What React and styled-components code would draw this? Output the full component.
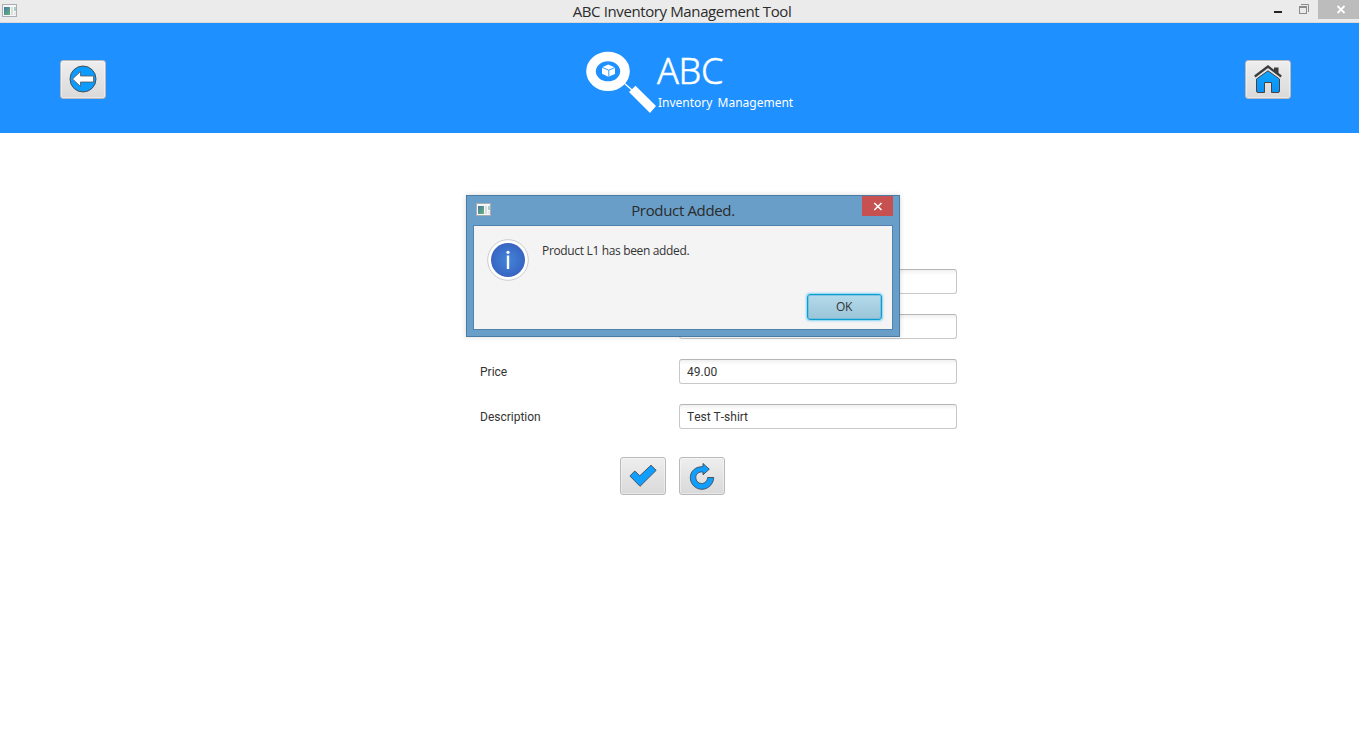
import React from "react";
import styled, { createGlobalStyle } from "styled-components";

const GlobalStyle = createGlobalStyle`
  * { box-sizing: border-box; }
  body { margin: 0; background: #fff; overflow: hidden; }
  button { font: inherit; padding: 0; margin: 0; }
  svg { display: block; flex: none; }
`;

const Window = styled.div`
  position: relative;
  width: 1359px;
  height: 756px;
  background: #fff;
  font-family: Roboto, "Liberation Sans", sans-serif;
  font-size: 12px;
  color: #333;
`;

const TitleBar = styled.header`
  display: grid;
  grid-template-columns: 1fr auto 1fr;
  height: 23px;
  background: #ebebeb;
  border-bottom: 1px solid #dcd8d4;
`;

const TitleIcon = styled.div`
  padding: 4px 0 0 2px;
`;

const TitleText = styled.div`
  padding-left: 5px;
  font: 15px/23px "Open Sans", "Noto Sans", sans-serif;
  letter-spacing: -0.38px;
  color: #2b2b2b;
  white-space: nowrap;
`;

const WindowControls = styled.div`
  display: flex;
  justify-content: flex-end;
`;

const Control = styled.div`
  width: ${(p) => p.$width}px;
  height: 19px;
  background: ${(p) => p.$bg || "transparent"};
`;

const Banner = styled.div`
  display: flex;
  align-items: flex-start;
  justify-content: space-between;
  height: 110px;
  padding: 28px 68px 0 60px;
  background: #1e90ff;
`;

const IconButton = styled.button`
  display: flex;
  align-items: center;
  justify-content: center;
  width: 46px;
  height: ${(p) => p.$height || 38}px;
  margin-top: ${(p) => p.$top || 0}px;
  padding-bottom: ${(p) => p.$lift || 0}px;
  border: 1px solid #b9b9b9;
  border-radius: 3px;
  background: linear-gradient(#eee, #d9d9d9);
  box-shadow: inset 0 0 0 1px rgba(255, 255, 255, 0.4);
`;

const Brand = styled.div`
  display: flex;
  width: 214px;
  margin-left: 35px;
`;

const BrandText = styled.div`
  display: flex;
  flex-direction: column;
  color: #fff;
  white-space: nowrap;
`;

const BrandName = styled.div`
  margin-left: 1px;
  font: 300 36px/39px "Noto Sans", "Open Sans", sans-serif;
  letter-spacing: -0.3px;
  -webkit-text-stroke: 0.5px #fff;
`;

const BrandSub = styled.div`
  margin: 6px 0 0 2px;
  font: 12px/14px "Noto Sans", "Open Sans", sans-serif;
  word-spacing: 2px;
`;

const Form = styled.form`
  display: flex;
  flex-direction: column;
  gap: 20px;
  padding: 136px 0 0 480px;
`;

const Field = styled.label`
  display: grid;
  grid-template-columns: 199px 278px;
  align-items: center;
  height: 25px;
`;

const Input = styled.input`
  grid-column: 2;
  width: 278px;
  height: 25px;
  padding: 0 7px;
  font: inherit;
  font-kerning: none;
  color: #333;
  border: 1px solid #c8c8c8;
  border-top-color: #b5b5b5;
  border-radius: 3px;
  outline: none;
  background: linear-gradient(#f0f0f0, #fff 5px);
`;

const Actions = styled.div`
  display: flex;
  gap: 13px;
  padding: 8px 0 0 140px;
`;

const Dialog = styled.section`
  position: absolute;
  left: 466px;
  top: 195px;
  width: 434px;
  height: 142px;
  padding: 0 6px 6px;
  border: 1px solid #4a7ba3;
  background: #689ec8;
  box-shadow: 0 0 5px rgba(0, 0, 0, 0.16);
`;

const DialogBar = styled.div`
  display: grid;
  grid-template-columns: 1fr auto 1fr;
  height: 29px;
`;

const DialogIcon = styled.div`
  padding: 7px 0 0 3px;
`;

const DialogTitle = styled.div`
  font: 15px/29px "Open Sans", "Noto Sans", sans-serif;
  letter-spacing: -0.34px;
  color: #2b2b2b;
`;

const DialogClose = styled.div`
  justify-self: end;
  width: 31px;
  height: 20px;
  background: #c75050;
`;

const DialogBody = styled.div`
  display: flex;
  height: 105px;
  padding: 13px 10px 9px 13px;
  border: 1px solid #4f82ac;
  background: #f4f4f4;
  font-family: "Open Sans", "Noto Sans", sans-serif;
`;

const Message = styled.p`
  flex: 1;
  margin: 4px 0 0 13px;
  line-height: 16px;
  letter-spacing: -0.34px;
`;

const OkButton = styled.button`
  align-self: flex-end;
  width: 75px;
  height: 26px;
  padding: 0 1px 2px 0;
  border: 1px solid #0b9dd2;
  border-radius: 3px;
  color: #333;
  letter-spacing: -0.3px;
  background: linear-gradient(#b4dbeb, #9bc4d8);
  box-shadow: inset 0 0 0 1px rgba(90, 180, 215, 0.55), 0 0 2px 1px rgba(70, 195, 238, 0.65);
`;

const AppIcon = () => (
  <svg width="16" height="14" viewBox="0 0 16 14">
    <defs>
      <linearGradient id="app" x1="0" y1="0" x2="1" y2="1">
        <stop offset="0" stopColor="#4676a8" />
        <stop offset="1" stopColor="#63b877" />
      </linearGradient>
    </defs>
    <rect x=".5" y=".5" width="14" height="12" fill="#f7f7f7" stroke="#a9adb5" />
    <rect x="2" y="3" width="6" height="8" fill="url(#app)" />
    <rect x="9" y="3" width="2" height="8" fill="#ddd" />
    <rect x="12" y="3" width="2" height="4" fill="#a8cfc9" />
    <rect x="12" y="8" width="2" height="3" fill="#e8e8e8" />
  </svg>
);

const BackIcon = () => (
  <svg width="28" height="28" viewBox="0 0 28 28">
    <circle cx="14" cy="14" r="13" fill="#0c9cff" stroke="#454545" strokeWidth=".9" />
    <path d="M3.5 14 L11.5 6.5 V11 H24.5 V17 H11.5 V21.5 Z" fill="#fff" stroke="#555" strokeWidth=".8" />
  </svg>
);

const HomeIcon = () => (
  <svg width="28" height="28" viewBox="0 0 28 28">
    <defs>
      <linearGradient id="home" x1="0" y1="0" x2="0" y2="1">
        <stop offset="0" stopColor="#0fa4ff" />
        <stop offset="1" stopColor="#0b91f5" />
      </linearGradient>
    </defs>
    <path d="M20 2.5 H24.5 V9 L20 6 Z" fill="#3c3c3c" />
    <path d="M.8 11.5 L14 1.5 L27.2 11.5" fill="none" stroke="#3c3c3c" strokeWidth="2.2" />
    <path d="M14 5.8 L2.5 14 V26 Q2.5 27.5 4 27.5 H10.5 V17.5 H17.5 V27.5 H24 Q25.5 27.5 25.5 26 V14 Z" fill="url(#home)" stroke="#444" />
  </svg>
);

const CheckIcon = () => (
  <svg width="28" height="24" viewBox="0 0 28 24">
    <path d="M.9 12 L5.8 7 L10.8 11.8 L22 1.2 L27.2 6.3 L11 22.3 Z" fill="#109fff" stroke="#3f4a55" strokeLinejoin="round" strokeWidth=".9" />
  </svg>
);

const ResetIcon = () => (
  <svg width="26" height="28" viewBox="0 0 26 28">
    <path d="M14 1.5 L20.3 7.2 L14 12.8 V10 C9.3 9.5 6.8 12.2 6.8 15.6 C6.8 19.2 9.3 21.5 12.6 21.5 C16 21.5 18.4 19 18.6 15.5 H24.7 C24.5 22 19.2 27.3 12.9 27.3 C6.5 27.3 1.3 22 1.3 15.6 C1.3 9.3 6.5 4.3 14 4.7 Z" fill="#109fff" stroke="#3f4a55" strokeLinejoin="round" strokeWidth=".9" />
  </svg>
);

const LogoMark = () => (
  <svg width="70" height="64" viewBox="0 0 70 64">
    <ellipse cx="22" cy="20.3" rx="17" ry="14.8" fill="none" stroke="#fff" strokeWidth="9.6" />
    <path d="M38 32 L46 39" stroke="#fff" strokeWidth="1.4" />
    <path d="M49.5 34.8 L70 55 L64 62 L43 41 Z" fill="#fff" />
    <path d="M22.3 13.5 L29 16.5 V23 L22.3 25.8 L16 22.7 V16.3 Z" fill="#fff" />
    <path d="M16 16.3 L22.8 19.2 L29 16.5 M22.8 19.2 V25.5" fill="none" stroke="#1e90ff" strokeWidth=".9" />
  </svg>
);

const InfoIcon = () => (
  <svg width="42" height="42" viewBox="0 0 42 42">
    <defs>
      <radialGradient id="info">
        <stop offset="0" stopColor="#4285dc" />
        <stop offset="1" stopColor="#3865c0" />
      </radialGradient>
    </defs>
    <circle cx="21" cy="21" r="20.3" fill="#fff" stroke="#cbcbd0" />
    <circle cx="21" cy="21" r="17" fill="url(#info)" />
    <circle cx="21" cy="13.3" r="1.6" fill="#fff" />
    <rect x="19.8" y="16.5" width="2.4" height="13.5" fill="#fff" />
  </svg>
);

const fields = [
  { name: "first", value: "" },
  { name: "second", value: "" },
  { name: "price", label: "Price", value: "49.00" },
  { name: "description", label: "Description", value: "Test T-shirt" },
];

export default function App() {
  return (
    <Window>
      <GlobalStyle />
      <TitleBar>
        <TitleIcon><AppIcon /></TitleIcon>
        <TitleText>ABC Inventory Management Tool</TitleText>
        <WindowControls>
          <Control $width={26}>
            <svg width="26" height="19"><rect x="10" y="11" width="8" height="2" fill="#222" /></svg>
          </Control>
          <Control $width={28}>
            <svg width="28" height="19">
              <path d="M11 4.5 H18.5 V12" fill="none" stroke="#8b8b8b" />
              <rect x="9.5" y="6.5" width="7" height="7" fill="none" stroke="#8b8b8b" />
              <path d="M9 7.5 H17" stroke="#8b8b8b" />
            </svg>
          </Control>
          <Control $width={41} $bg="#bcbcbc">
            <svg width="41" height="19"><path d="M19.5 6 L26.5 13 M26.5 6 L19.5 13" stroke="#fff" strokeWidth="1.8" /></svg>
          </Control>
        </WindowControls>
      </TitleBar>
      <Banner>
        <IconButton $height={39} $top={9} $lift={1}><BackIcon /></IconButton>
        <Brand>
          <LogoMark />
          <BrandText>
            <BrandName>ABC</BrandName>
            <BrandSub>Inventory Management</BrandSub>
          </BrandText>
        </Brand>
        <IconButton $height={39} $top={9} $lift={1}><HomeIcon /></IconButton>
      </Banner>
      <Form>
        {fields.map((f) => (
          <Field key={f.name}>
            {f.label}
            <Input defaultValue={f.value} />
          </Field>
        ))}
        <Actions>
          <IconButton type="button"><CheckIcon /></IconButton>
          <IconButton type="button" $lift={1}><ResetIcon /></IconButton>
        </Actions>
      </Form>
      <Dialog>
        <DialogBar>
          <DialogIcon><AppIcon /></DialogIcon>
          <DialogTitle>Product Added.</DialogTitle>
          <DialogClose>
            <svg width="31" height="20"><path d="M12.3 7 L19.5 14 M19.5 7 L12.3 14" stroke="#fff" strokeWidth="1.6" /></svg>
          </DialogClose>
        </DialogBar>
        <DialogBody>
          <InfoIcon />
          <Message>Product L1 has been added.</Message>
          <OkButton>OK</OkButton>
        </DialogBody>
      </Dialog>
    </Window>
  );
}
